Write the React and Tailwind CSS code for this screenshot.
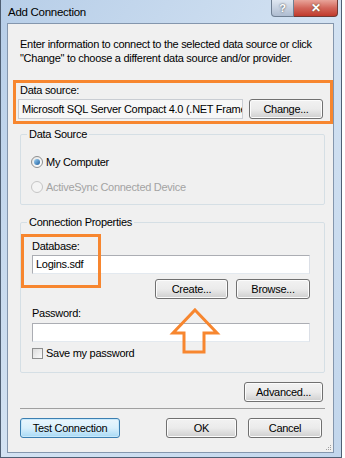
import React from "react";

const font = { fontFamily: '"Liberation Sans", Arial, sans-serif' };

function Btn({ children, className = "", def = false }) {
  return (
    <div
      className={
        "flex items-center justify-center h-[20px] rounded-[3px] border text-black " +
        (def
          ? "border-[#3c7fb1] bg-gradient-to-b from-[#eaf6fd] via-[#d9f0fc] to-[#a7d9f5] shadow-[inset_0_0_0_1px_#c8e9fb]"
          : "border-[#707070] bg-gradient-to-b from-[#f2f2f2] via-[#ebebeb] to-[#cfcfcf] shadow-[inset_0_0_0_1px_#fcfcfc]") +
        " " +
        className
      }
    >
      {children}
    </div>
  );
}

export default function App() {
  return (
    <div className="w-[345px] h-[458px] bg-white overflow-hidden relative text-[11px] tracking-[-0.28px] text-black" style={font}>
      <div className="w-[342px] h-[458px] border-l border-r border-b border-[#4f5f73] bg-gradient-to-br from-[#b7cee8] via-[#d3e2f2] to-[#c2d6ec] flex flex-col">
        {/* title bar */}
        <div className="h-[23px] flex items-start relative">
          <div className="pl-[7px] pt-[5px] leading-[14px] text-[11.5px] text-black">Add Connection</div>
          <div className="ml-auto mr-[3px] flex">
            <div className="w-[23px] h-[17px] rounded-bl-[4px] border border-t-0 border-[#6f7f92] bg-gradient-to-b from-[#dfe7f1] to-[#aebcd0] flex items-center justify-center text-white font-bold text-[11px] leading-none [text-shadow:0_0_2px_#333]">
              ?
            </div>
            <div className="w-[44px] h-[17px] rounded-br-[4px] border border-l-0 border-t-0 border-[#6f3a35] bg-gradient-to-b from-[#e8a49a] via-[#d2655a] to-[#c0392b] flex items-center justify-center text-white font-bold text-[12px] leading-none [text-shadow:0_0_2px_#552]">
              ✕
            </div>
          </div>
        </div>
        {/* panel */}
        <div className="ml-[6px] w-[327px] h-[430px] border border-[#8496ad] bg-[#f0f0f0] flex flex-col relative">
          <div className="mt-[13px] ml-[12px] leading-[14px]">
            <div>Enter information to connect to the selected data source or click</div>
            <div>"Change" to choose a different data source and/or provider.</div>
          </div>

          {/* data source orange box */}
          <div className="mt-[15px] ml-[5px] w-[320px] h-[44px] border-[3px] border-[#f7862f] flex flex-col">
            <div className="pl-[4px] leading-[15px] h-[15px]">Data source:</div>
            <div className="mt-[1px] flex items-center">
              <div className="ml-[2px] w-[225px] h-[20px] border border-[#c9cdd3] bg-[#f7f7f7] pl-[3px] leading-[18px] whitespace-nowrap overflow-hidden">
                Microsoft SQL Server Compact 4.0 (.NET Framework Data Provider for SQL Server Compact 4.0)
              </div>
              <Btn className="ml-[6px] w-[74px]">Change...</Btn>
            </div>
          </div>

          {/* Data Source group */}
          <fieldset className="mt-[3px] ml-[12px] w-[305px] border border-[#d5dfe5] rounded-[2px] pb-[9px]">
            <legend className="ml-[6px] px-[2px] leading-[15px]">Data Source</legend>
            <div className="mt-[12px] ml-[10px] flex items-center h-[16px]">
              <div className="w-[12px] h-[12px] rounded-full border border-[#8e8f8f] bg-gradient-to-br from-[#e6e6e6] to-[#ffffff] flex items-center justify-center">
                <div className="w-[6px] h-[6px] rounded-full bg-gradient-to-br from-[#9fd4f6] to-[#1b5f9e]" />
              </div>
              <span className="ml-[3px]">My Computer</span>
            </div>
            <div className="mt-[9px] ml-[10px] flex items-center h-[16px] text-[#a3a3a3]">
              <div className="w-[12px] h-[12px] rounded-full border border-[#c5c5c5] bg-[#f4f4f4]" />
              <span className="ml-[3px]">ActiveSync Connected Device</span>
            </div>
          </fieldset>

          {/* Connection Properties group */}
          <fieldset className="mt-[10px] ml-[12px] w-[305px] border border-[#d5dfe5] rounded-[2px] pb-[11px] relative">
            <legend className="ml-[6px] px-[2px] leading-[15px]">Connection Properties</legend>
            <div className="mt-[9px] ml-[11px] leading-[15px]">Database:</div>
            <div className="mt-[1px] ml-[11px] w-[278px] h-[19px] border border-[#abadb3] border-b-[#e3e9ef] border-r-[#dbdfe6] bg-white pl-[3px] leading-[17px]">
              Logins.sdf
            </div>
            <div className="mt-[5px] flex justify-end pr-[14px] gap-[8px]">
              <Btn className="w-[73px]">Create...</Btn>
              <Btn className="w-[74px]">Browse...</Btn>
            </div>
            <div className="mt-[7px] ml-[11px] leading-[15px]">Password:</div>
            <div className="mt-[2px] ml-[11px] w-[278px] h-[19px] border border-[#abadb3] border-b-[#e3e9ef] border-r-[#dbdfe6] bg-white" />
            <div className="mt-[4px] ml-[11px] flex items-center h-[15px]">
              <div className="w-[11px] h-[11px] border border-[#8e8f8f] bg-gradient-to-br from-[#dcdcdc] to-[#fbfbfb]" />
              <span className="ml-[3px]">Save my password</span>
            </div>
            {/* orange annotation around Database */}
            <div className="absolute left-0 top-[4px] w-[80px] h-[54px] border-[3px] border-[#f7862f]" />
          </fieldset>

          <div className="mt-[9px] flex justify-end pr-[10px]">
            <Btn className="w-[79px]">Advanced...</Btn>
          </div>

          <div className="mt-[6px] ml-[12px] w-[305px] h-px bg-[#a0a0a0]" />

          <div className="mt-[9px] flex items-center pl-[12px]">
            <Btn def className="w-[100px]">Test Connection</Btn>
            <Btn className="ml-[46px] w-[71px]">OK</Btn>
            <Btn className="ml-[11px] w-[74px]">Cancel</Btn>
          </div>

          <svg className="absolute right-[1px] bottom-[1px]" width="6" height="6" viewBox="0 0 6 6">
            <rect x="4" y="0" width="1" height="1" fill="#a0a0a0" />
            <rect x="2" y="2" width="1" height="1" fill="#a0a0a0" />
            <rect x="4" y="2" width="1" height="1" fill="#a0a0a0" />
            <rect x="0" y="4" width="1" height="1" fill="#a0a0a0" />
            <rect x="2" y="4" width="1" height="1" fill="#a0a0a0" />
            <rect x="4" y="4" width="1" height="1" fill="#a0a0a0" />
          </svg>
        </div>
      </div>

      {/* orange arrow annotation */}
      <svg className="absolute left-[168px] top-[305px]" width="54" height="52" viewBox="168 305 54 52">
        <polygon
          points="195,310 217,333 204,333 204,352 184,352 184,333 173,333"
          fill="none"
          stroke="#f7862f"
          strokeWidth="3"
          strokeLinejoin="miter"
        />
      </svg>
    </div>
  );
}
